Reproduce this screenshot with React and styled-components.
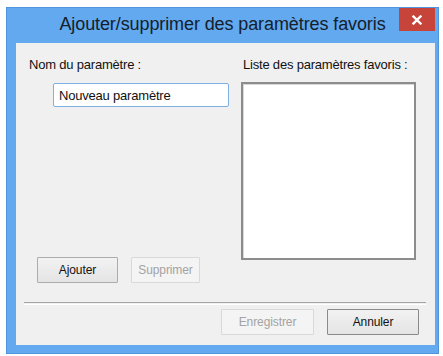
import React from 'react';
import styled, { createGlobalStyle } from 'styled-components';

const GlobalStyle = createGlobalStyle`
  html, body {
    margin: 0;
    padding: 0;
    background: #ffffff;
  }
  body {
    font-family: "Liberation Sans", Arial, sans-serif;
  }
`;

function App() {
  return (
    <>
      <GlobalStyle />
      <Page>
        <Window>
          <TitleBar>
            <Title>Ajouter/supprimer des paramètres favoris</Title>
            <CloseButton aria-label="Fermer">
              <svg width="10" height="10" viewBox="0 0 10 10">
                <path d="M1.5 1.5 L8.5 8.5 M8.5 1.5 L1.5 8.5" stroke="#fff" strokeWidth="2.4" strokeLinecap="square" />
              </svg>
            </CloseButton>
          </TitleBar>
          <Client>
            <Columns>
              <LeftColumn>
                <Label>Nom du paramètre :</Label>
                <NameInput defaultValue="Nouveau paramètre" />
                <ButtonRow>
                  <DialogButton $width={81}>Ajouter</DialogButton>
                  <DialogButton $width={69} disabled>Supprimer</DialogButton>
                </ButtonRow>
              </LeftColumn>
              <RightColumn>
                <Label>Liste des paramètres favoris :</Label>
                <ListBox />
              </RightColumn>
            </Columns>
            <Separator />
            <Footer>
              <DialogButton $width={93} disabled>Enregistrer</DialogButton>
              <DialogButton $width={92} $default>Annuler</DialogButton>
            </Footer>
          </Client>
        </Window>
      </Page>
    </>
  );
}

const Page = styled.div`
  padding: 7px 0 0 6px;
`;

const Window = styled.div`
  width: 433px;
  box-sizing: border-box;
  background: #62a9ef;
  padding: 0 3px 8px 9px;
  border: 1px solid #4f95dd;
`;

const TitleBar = styled.div`
  position: relative;
  height: 35px;
  display: flex;
  align-items: center;
  justify-content: center;
`;

const Title = styled.div`
  font-size: 18px;
  color: #15202c;
  padding-right: 6px;
  margin-top: -2px;
  letter-spacing: -0.1px;
`;

const CloseButton = styled.button`
  position: absolute;
  top: 0;
  right: 0;
  width: 36px;
  height: 23px;
  border: none;
  padding: 0;
  background: #c7443b;
  display: flex;
  align-items: center;
  justify-content: center;
`;

const Client = styled.div`
  background: #f0f0f0;
  height: 302px;
  box-sizing: border-box;
  padding: 14px 16px 0 11px;
  display: flex;
  flex-direction: column;
`;

const Columns = styled.div`
  display: grid;
  grid-template-columns: 214px 175px;
  height: 226px;
`;

const LeftColumn = styled.div`
  display: flex;
  flex-direction: column;
`;

const RightColumn = styled.div`
  display: flex;
  flex-direction: column;
`;

const Label = styled.div`
  font-size: 13px;
  line-height: 16px;
  color: #111;
  padding-left: 2px;
  white-space: nowrap;
  letter-spacing: -0.2px;
`;

const NameInput = styled.input`
  margin: 10px 0 0 26px;
  width: 176px;
  height: 24px;
  box-sizing: border-box;
  border: 1px solid #7eb0e4;
  border-radius: 2px;
  background: #ffffff;
  padding: 0 5px;
  font-family: "Liberation Sans", Arial, sans-serif;
  font-size: 13px;
  letter-spacing: -0.2px;
  color: #111;
  outline: none;
`;

const ButtonRow = styled.div`
  margin-top: auto;
  padding-left: 10px;
  display: flex;
  gap: 13px;
`;

const ListBox = styled.div`
  margin-top: 9px;
  height: 178px;
  box-sizing: border-box;
  background: #ffffff;
  border: 2px solid #8c8c8c;
  box-shadow: inset 1px 1px 0 #d8d8d8;
`;

const Separator = styled.div`
  margin: 19px -7px 0 -3px;
  height: 1px;
  border-top: 1px solid #a5a5a5;
  border-bottom: 1px solid #ffffff;
`;

const Footer = styled.div`
  margin-top: 4px;
  display: flex;
  justify-content: flex-end;
  gap: 13px;
`;

const DialogButton = styled.button`
  width: ${(p) => p.$width}px;
  height: 26px;
  box-sizing: border-box;
  padding: 0;
  font-family: "Liberation Sans", Arial, sans-serif;
  font-size: 12px;
  letter-spacing: -0.1px;
  color: #111;
  border: 1px solid ${(p) => (p.$default ? '#8a8a8a' : '#acacac')};
  border-radius: 1px;
  background: linear-gradient(#f2f2f2, #e4e4e4);
  &:disabled {
    color: #a3a3a3;
    border-color: #d9d9d9;
    background: #f4f4f4;
  }
`;

export default App;
